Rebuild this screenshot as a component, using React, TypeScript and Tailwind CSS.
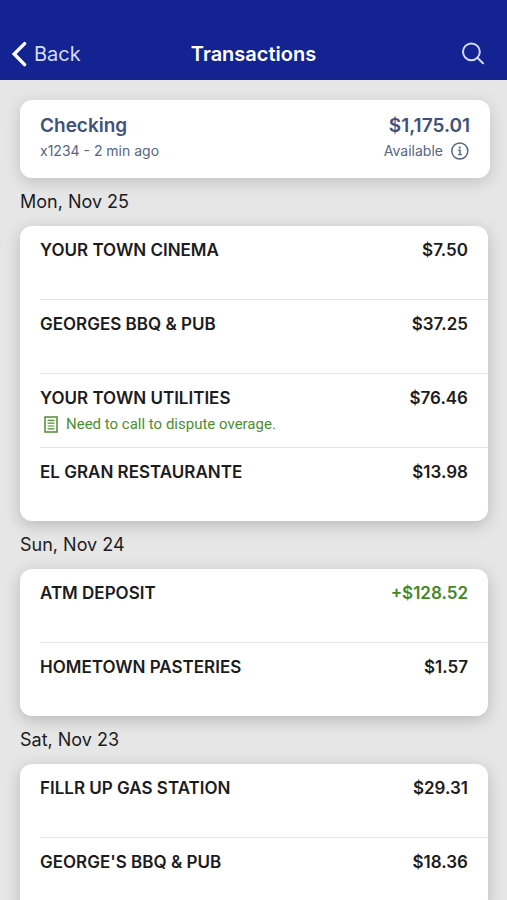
type Transaction = {
  name: string;
  amount: string;
  credit?: boolean;
  note?: string;
};

type Day = {
  date: string;
  transactions: Transaction[];
};

const days: Day[] = [
  {
    date: 'Mon, Nov 25',
    transactions: [
      { name: 'YOUR TOWN CINEMA', amount: '$7.50' },
      { name: 'GEORGES BBQ & PUB', amount: '$37.25' },
      { name: 'YOUR TOWN UTILITIES', amount: '$76.46', note: 'Need to call to dispute overage.' },
      { name: 'EL GRAN RESTAURANTE', amount: '$13.98' },
    ],
  },
  {
    date: 'Sun, Nov 24',
    transactions: [
      { name: 'ATM DEPOSIT', amount: '+$128.52', credit: true },
      { name: 'HOMETOWN PASTERIES', amount: '$1.57' },
    ],
  },
  {
    date: 'Sat, Nov 23',
    transactions: [
      { name: 'FILLR UP GAS STATION', amount: '$29.31' },
      { name: "GEORGE'S BBQ & PUB", amount: '$18.36' },
    ],
  },
];

function BackIcon() {
  return (
    <svg className="w-4 h-[26px]" viewBox="0 0 16 26" fill="none" stroke="currentColor" strokeWidth="3.4" strokeLinecap="round" strokeLinejoin="miter">
      <path d="M12.6 2.6 2.2 13l10.4 10.6" />
    </svg>
  );
}

function SearchIcon() {
  return (
    <svg className="w-6 h-6" viewBox="0 0 24 24" fill="none" stroke="currentColor" strokeWidth="2" strokeLinecap="round">
      <circle cx="10.4" cy="9.8" r="8.4" />
      <path d="m16.6 16 5.4 5.2" />
    </svg>
  );
}

function InfoIcon() {
  return (
    <svg className="w-[18px] h-[18px]" viewBox="0 0 18 18" fill="none" stroke="currentColor" strokeWidth="1.5">
      <circle cx="8.8" cy="9" r="8" />
      <circle cx="8.7" cy="5.6" r="1.1" fill="currentColor" stroke="none" />
      <path d="M7.2 8.3H9v4.2" />
      <path d="M7 12.6h3.8" strokeWidth="1.2" />
    </svg>
  );
}

function NoteIcon() {
  return (
    <svg className="w-[14px] h-[17px]" viewBox="0 0 14 17" fill="none" stroke="currentColor" strokeWidth="1.5">
      <path d="M1 1h12v15H1z" />
      <path d="M3.6 4.4h6.8M3.6 7.2h6.8M3.6 10h6.8M3.6 12.8h6.8" strokeWidth="1.2" />
    </svg>
  );
}

function TransactionRow({ name, amount, credit, note }: Transaction) {
  return (
    <div className="min-h-[73px] pt-3 pr-5">
      <div className="flex items-center justify-between text-[17px] leading-6 font-semibold">
        <span>{name}</span>
        <span className={credit ? 'text-[#3f8a1e]' : ''}>{amount}</span>
      </div>
      {note && (
        <div className="flex items-center gap-2 pl-1 mt-1 text-[#4c8f2f]">
          <NoteIcon />
          <span className="font-['Roboto',sans-serif] text-[15px] leading-5">{note}</span>
        </div>
      )}
    </div>
  );
}

export default function App() {
  return (
    <div className="min-h-screen bg-[#e6e6e6] font-['Inter',sans-serif] text-[#1c1c1e]">
      <header className="grid grid-cols-3 items-center h-20 pt-7 px-3 bg-[#132392] text-white">
        <button className="flex items-center gap-1.5 justify-self-start text-xl text-[#d5dcff]">
          <span className="text-white"><BackIcon /></span>
          Back
        </button>
        <h1 className="justify-self-center text-xl font-semibold">Transactions</h1>
        <button className="justify-self-end pr-2.5 text-[#d5dcff]" aria-label="Search">
          <SearchIcon />
        </button>
      </header>

      <main className="pt-5 pl-5">
        <section className="mr-[17px] px-5 pt-3 pb-4 bg-white rounded-xl shadow-[0_4px_16px_rgba(0,0,0,0.16)] text-[#566584]">
          <div className="flex items-center justify-between text-[19px] leading-7 font-semibold text-[#40527c]">
            <h2>Checking</h2>
            <span>$1,175.01</span>
          </div>
          <div className="flex items-center justify-between h-[22px] text-sm">
            <span>x1234 - 2 min ago</span>
            <button className="flex items-center gap-2 pr-px">
              Available
              <InfoIcon />
            </button>
          </div>
        </section>

        {days.map((day) => (
          <section key={day.date} className="mr-[19px]">
            <h3 className="py-2.5 text-lg leading-7">{day.date}</h3>
            <ul className="pl-5 bg-white rounded-xl shadow-[0_4px_16px_rgba(0,0,0,0.2)]">
              {day.transactions.map((t) => (
                <li key={t.name} className="border-t border-[#e6e6e6] first:border-t-0">
                  <TransactionRow {...t} />
                </li>
              ))}
            </ul>
          </section>
        ))}
      </main>
    </div>
  );
}
